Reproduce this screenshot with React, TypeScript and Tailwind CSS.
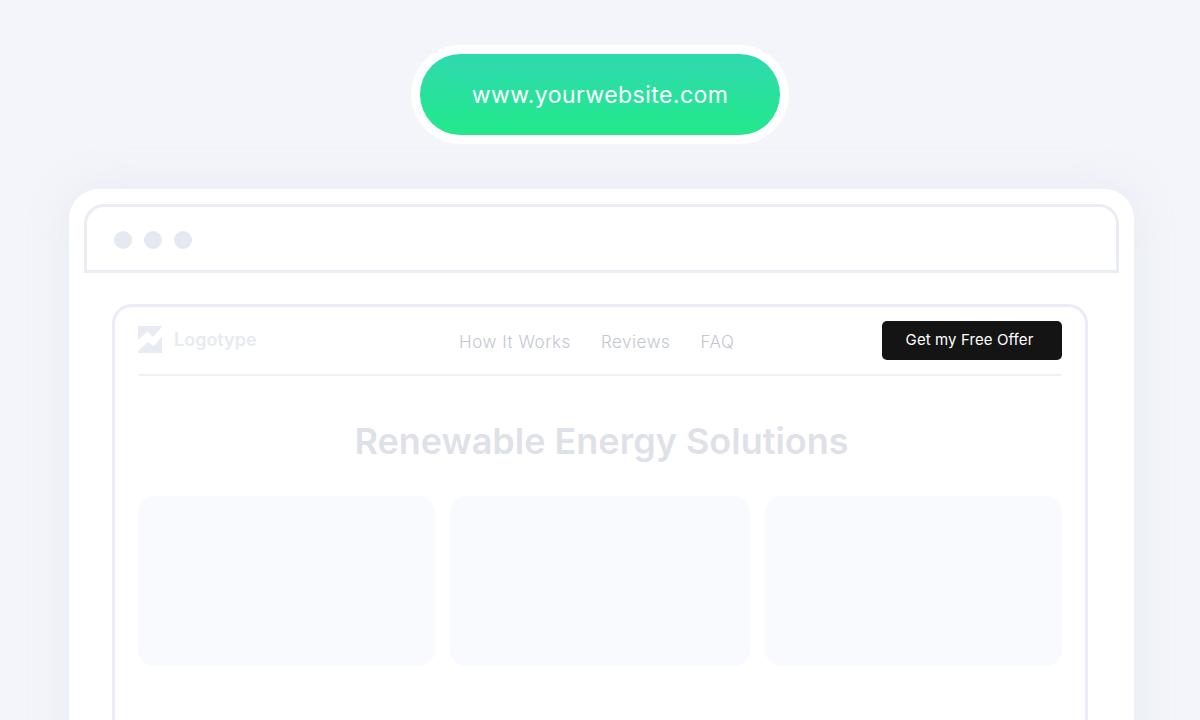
const navLinks = ["How It Works", "Reviews", "FAQ"];

function LogoMark() {
  return (
    <svg width="24" height="27" viewBox="0 0 24 27" className="shrink-0">
      <rect width="24" height="27" fill="#e9ebf2" />
      <path
        d="M0 14 L8 7 C9 6 10 6 11 7 L15 11 L24 1 L24 10 L17 19 C16 20 15 20 14 19 L10 16 L0 25 Z"
        fill="#ffffff"
      />
    </svg>
  );
}

export default function App() {
  return (
    <div className="flex h-[720px] flex-col items-center overflow-hidden bg-[#f3f5fa] pt-[45px] font-['Inter',sans-serif]">
      <div className="rounded-full bg-white p-[9px]">
        <div className="flex h-[81px] w-[360px] items-center justify-center rounded-full bg-gradient-to-b from-[#2fd9ae] to-[#22e98a] pt-[1px] text-[23px] tracking-[0.45px] text-white">
          www.yourwebsite.com
        </div>
      </div>

      <div className="mt-[45px] ml-[3px] w-[1065px] flex-1 rounded-t-[30px] bg-white px-[15px] pt-[15px] shadow-[0_0_40px_rgba(200,205,225,0.25)]">
        <div className="flex h-[69px] items-center gap-[12px] rounded-t-[20px] border-[3px] border-[#ebedf4] pt-[3px] pl-[27px]">
          <span className="h-[18px] w-[18px] rounded-full bg-[#e6e9f1]" />
          <span className="h-[18px] w-[18px] rounded-full bg-[#e6e9f1]" />
          <span className="h-[18px] w-[18px] rounded-full bg-[#e6e9f1]" />
        </div>

        <div className="mt-[31px] mr-[31px] ml-[28px] h-[500px] rounded-t-[20px] border-x-[3px] border-t-[3px] border-[#ebedf4] px-[23px]">
          <div className="flex h-[69px] items-center border-b-2 border-[#f0f1f6] pt-[3px]">
            <div className="flex w-[321px] items-center gap-[12px] pb-[5px]">
              <LogoMark />
              <span className="text-[18px] font-semibold text-[#e8eaf1]">Logotype</span>
            </div>
            <nav className="mt-[2px] flex items-center gap-[30px] text-[17px] font-light tracking-[0.55px] text-[#c3c7d3]">
              {navLinks.map((link) => (
                <span key={link}>{link}</span>
              ))}
            </nav>
            <button className="mb-[3px] ml-auto h-[39px] w-[180px] rounded-[5px] bg-[#141414] pr-[5px] text-[15px] tracking-[0.1px] text-white">
              Get my Free Offer
            </button>
          </div>

          <h1 className="mt-[41px] pl-[3px] text-center text-[36px] leading-[48px] font-semibold text-[#dfe1e9]">
            Renewable Energy Solutions
          </h1>

          <div className="mt-[31px] grid grid-cols-[297px_300px_297px] gap-[15px]">
            <div className="h-[170px] rounded-[16px] bg-[#f9fafd]" />
            <div className="h-[170px] rounded-[16px] bg-[#f9fafd]" />
            <div className="h-[170px] rounded-[16px] bg-[#f9fafd]" />
          </div>
        </div>
      </div>
    </div>
  );
}
